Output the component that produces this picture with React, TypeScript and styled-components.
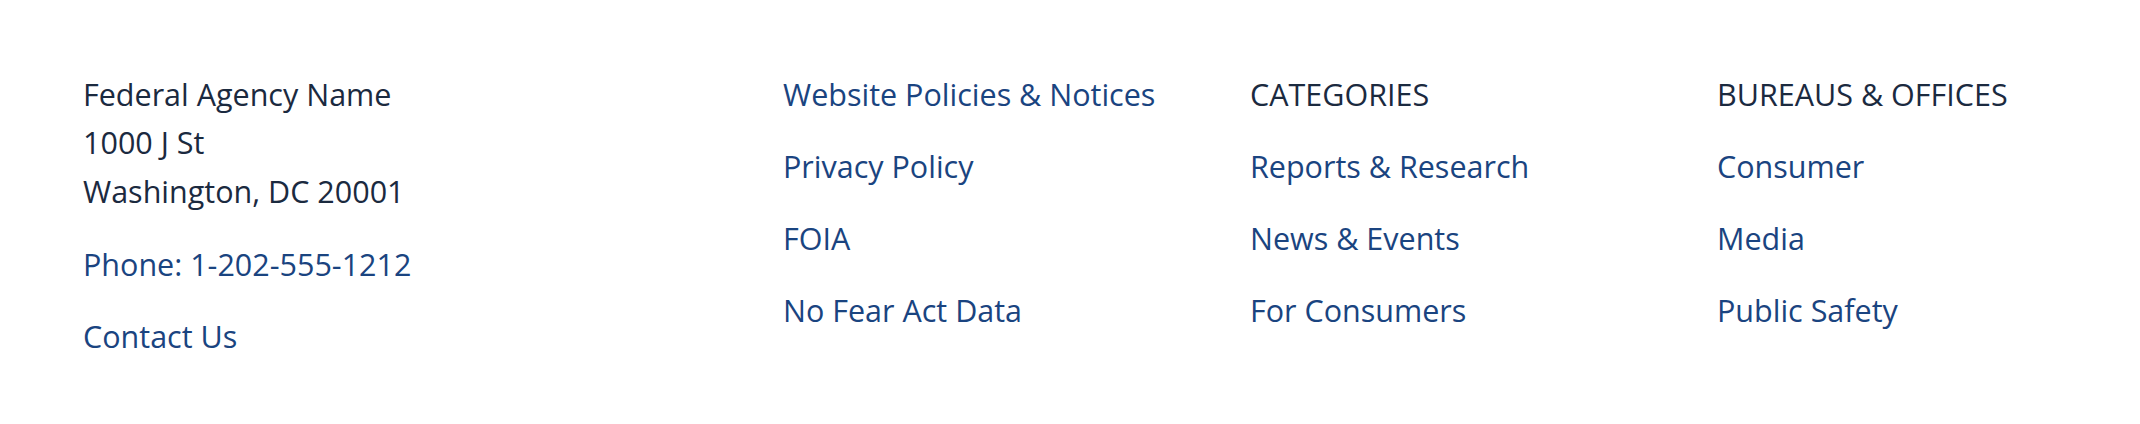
import { createGlobalStyle, styled } from 'styled-components'

const GlobalStyle = createGlobalStyle`
  html, body {
    margin: 0;
    padding: 0;
    background: #ffffff;
  }
  body {
    font-family: 'Open Sans', 'Noto Sans', sans-serif;
  }
`

interface LinkItem {
  label: string
}

const policyLinks: LinkItem[] = [
  { label: 'Website Policies & Notices' },
  { label: 'Privacy Policy' },
  { label: 'FOIA' },
  { label: 'No Fear Act Data' },
]

const categoryLinks: LinkItem[] = [
  { label: 'Reports & Research' },
  { label: 'News & Events' },
  { label: 'For Consumers' },
]

const bureauLinks: LinkItem[] = [
  { label: 'Consumer' },
  { label: 'Media' },
  { label: 'Public Safety' },
]

function LinkColumn({ heading, links }: { heading?: string; links: LinkItem[] }) {
  return (
    <Column>
      {heading && <ColumnHeading>{heading}</ColumnHeading>}
      {links.map((link) => (
        <FooterLink key={link.label} href="#">
          {link.label}
        </FooterLink>
      ))}
    </Column>
  )
}

export default function App() {
  return (
    <>
      <GlobalStyle />
      <Footer>
        <FooterGrid>
          <Column>
            <Address>
              <AddressLine>Federal Agency Name</AddressLine>
              <AddressLine>1000 J St</AddressLine>
              <AddressLine>Washington, DC 20001</AddressLine>
            </Address>
            <FooterLink href="#">Phone: 1-202-555-1212</FooterLink>
            <FooterLink href="#">Contact Us</FooterLink>
          </Column>
          <LinkColumn links={policyLinks} />
          <LinkColumn heading="CATEGORIES" links={categoryLinks} />
          <LinkColumn heading="BUREAUS & OFFICES" links={bureauLinks} />
        </FooterGrid>
      </Footer>
    </>
  )
}

// ============ 样式组件 ============

const Footer = styled.footer`
  width: 2140px;
  height: 424px;
  box-sizing: border-box;
  padding: 69.5px 83px 0 83px;
  background: #ffffff;
`

const FooterGrid = styled.div`
  display: grid;
  grid-template-columns: 700px 467px 467px 1fr;
  align-items: start;
`

const Column = styled.div`
  display: flex;
  flex-direction: column;
  align-items: flex-start;
  gap: 24px;
  font-size: 30.5px;
  line-height: 48px;
`

// 地址块行高略大于链接
const Address = styled.address`
  display: flex;
  flex-direction: column;
  font-style: normal;
  line-height: 48.7px;
  color: #1b2a3f;
`

const AddressLine = styled.span`
  display: block;
`

const ColumnHeading = styled.div`
  color: #1b2a3f;
  text-transform: uppercase;
`

const FooterLink = styled.a`
  color: #1a4480;
  text-decoration: none;
`
